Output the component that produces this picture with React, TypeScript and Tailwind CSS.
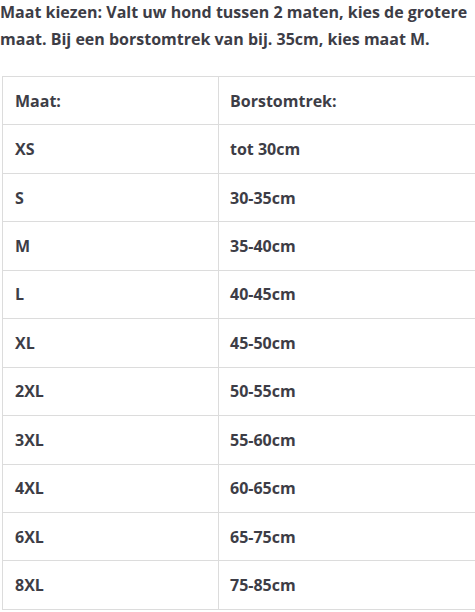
const rows: [string, string][] = [
  ['XS', 'tot 30cm'],
  ['S', '30-35cm'],
  ['M', '35-40cm'],
  ['L', '40-45cm'],
  ['XL', '45-50cm'],
  ['2XL', '50-55cm'],
  ['3XL', '55-60cm'],
  ['4XL', '60-65cm'],
  ['6XL', '65-75cm'],
  ['8XL', '75-85cm'],
];

export default function App() {
  return (
    <div
      className="w-[475px] h-[612px] overflow-hidden bg-white text-[#3d3d46] font-bold"
      style={{ fontFamily: '"Open Sans", "Noto Sans", sans-serif' }}
    >
      {/* intro */}
      <p className="text-[16px] leading-[27px] whitespace-nowrap -mt-[1px]">
        Maat kiezen: Valt uw hond tussen 2 maten, kies de grotere
        <br />
        maat. Bij een borstomtrek van bij. 35cm, kies maat M.
      </p>

      {/* maattabel */}
      <div className="mt-[23px] ml-[2px] w-[520px] border-t border-l border-[#dcdcdc] text-[16px]">
        <div className="flex h-[48.45px] border-b border-[#dcdcdc]">
          <div className="w-[216px] border-r border-[#dcdcdc] flex items-center pl-[12px]">Maat:</div>
          <div className="flex-1 flex items-center pl-[11px]">Borstomtrek:</div>
        </div>
        {rows.map(([maat, borst]) => (
          <div key={maat} className="flex h-[48.45px] border-b border-[#dcdcdc]">
            <div className="w-[216px] border-r border-[#dcdcdc] flex items-center pl-[12px]">{maat}</div>
            <div className="flex-1 flex items-center pl-[11px]">{borst}</div>
          </div>
        ))}
      </div>
    </div>
  );
}
